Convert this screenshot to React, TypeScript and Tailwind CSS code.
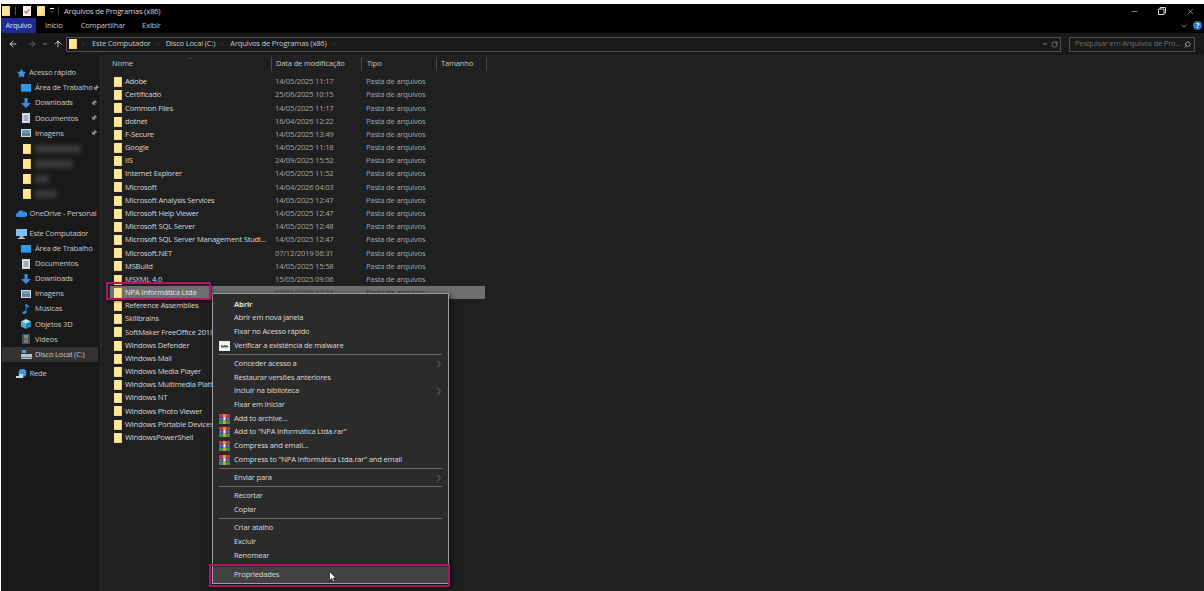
import React from 'react';
import { ArrowLeft, ArrowRight, ArrowUp, ChevronDown, ChevronRight, ChevronUp, RotateCw, Search, Minus, X, Pin, Star } from 'lucide-react';

const files: [string, string?][] = [
  ['Adobe', '14/05/2025 11:17'],
  ['Certificado', '25/06/2025 10:15'],
  ['Common Files', '14/05/2025 11:17'],
  ['dotnet', '16/04/2026 12:22'],
  ['F-Secure', '14/05/2025 13:49'],
  ['Google', '14/05/2025 11:18'],
  ['IIS', '24/09/2025 15:52'],
  ['Internet Explorer', '14/05/2025 11:52'],
  ['Microsoft', '14/04/2026 04:03'],
  ['Microsoft Analysis Services', '14/05/2025 12:47'],
  ['Microsoft Help Viewer', '14/05/2025 12:47'],
  ['Microsoft SQL Server', '14/05/2025 12:48'],
  ['Microsoft SQL Server Management Studi...', '14/05/2025 12:47'],
  ['Microsoft.NET', '07/12/2019 06:31'],
  ['MSBuild', '14/05/2025 15:58'],
  ['MSXML 4.0', '15/05/2025 09:06'],
  ['NPA Informática Ltda', '02/01/2026 12:24'],
  ['Reference Assemblies'],
  ['Skillbrains'],
  ['SoftMaker FreeOffice 2018'],
  ['Windows Defender'],
  ['Windows Mail'],
  ['Windows Media Player'],
  ['Windows Multimedia Platform'],
  ['Windows NT'],
  ['Windows Photo Viewer'],
  ['Windows Portable Devices'],
  ['WindowsPowerShell'],
];

const Folder = ({ className = '' }: { className?: string }) => (
  <svg viewBox="0 0 8 10" className={`w-2 h-2.5 shrink-0 ${className}`}>
    <rect width="8" height="10" fill="#ffe798" />
    <rect x="7" width="1" height="10" fill="#eec86c" />
    <rect y="9" width="8" height="1" fill="#f5d47c" />
  </svg>
);

const Winrar = () => (
  <svg viewBox="0 0 11 10" className="w-[11px] h-2.5">
    <rect width="11" height="3.4" fill="#c2363f" />
    <rect y="3.3" width="11" height="3.4" fill="#4a3fa8" />
    <rect y="6.6" width="11" height="3.4" fill="#3f8f3a" />
    <rect x="4" width="3" height="10" fill="#d9913a" />
    <rect x="4.8" y="3" width="1.4" height="3" fill="#f4efe2" />
    <rect x="1" y="4" width="1.5" height="1.5" fill="#8fa0e0" />
    <rect x="8.500" y="4" width="1.5" height="1.5" fill="#8fa0e0" />
  </svg>
);

type MenuRow = { label?: string; icon?: 'mb' | 'rar'; arrow?: boolean; bold?: boolean; sep?: boolean };

const menu: MenuRow[] = [
  { label: 'Abrir', bold: true },
  { label: 'Abrir em nova janela' },
  { label: 'Fixar no Acesso rápido' },
  { label: 'Verificar a existência de malware', icon: 'mb' },
  { sep: true },
  { label: 'Conceder acesso a', arrow: true },
  { label: 'Restaurar versões anteriores' },
  { label: 'Incluir na biblioteca', arrow: true },
  { label: 'Fixar em Iniciar' },
  { label: 'Add to archive...', icon: 'rar' },
  { label: 'Add to "NPA Informática Ltda.rar"', icon: 'rar' },
  { label: 'Compress and email...', icon: 'rar' },
  { label: 'Compress to "NPA Informática Ltda.rar" and email', icon: 'rar' },
  { sep: true },
  { label: 'Enviar para', arrow: true },
  { sep: true },
  { label: 'Recortar' },
  { label: 'Copiar' },
  { sep: true },
  { label: 'Criar atalho' },
  { label: 'Excluir' },
  { label: 'Renomear' },
  { sep: true },
];

const NavIcon = ({ kind }: { kind: string }) => {
  switch (kind) {
    case 'desktop':
      return <svg viewBox="0 0 10 8" className="w-2.5 h-2"><rect width="10" height="7" fill="#2f9be8" /><rect y="7" width="10" height="1" fill="#1c6fb0" /></svg>;
    case 'down':
      return <svg viewBox="0 0 10 10" className="w-2.5 h-2.5"><path d="M3.5 0h3v5H10L5 10 0 5h3.5z" fill="#3b8fe0" /></svg>;
    case 'docs':
      return <svg viewBox="0 0 10 10" className="w-2.5 h-2.5"><rect x="1" width="8" height="10" fill="#d5dde6" /><path d="M2.5 3h5M2.5 5h5M2.5 7h5" stroke="#55708c" strokeWidth="0.8" /></svg>;
    case 'pics':
      return <svg viewBox="0 0 10 8" className="w-2.5 h-2"><rect width="10" height="8" fill="#cfd8e2" /><rect x="1" y="1" width="8" height="3" fill="#5f9fc8" /><rect x="1" y="4" width="8" height="3" fill="#6b7c8c" /></svg>;
    case 'music':
      return <svg viewBox="0 0 10 10" className="w-2.5 h-2.5"><path d="M4.5 0h1l3 3-1 .8-2-1.4V8.2C5.500 9.300 4.200 10 3 10 1.900 10 1.300 9.300 1.500 8.500 1.800 7.500 3.300 6.900 4.500 7.100z" fill="#2d8fe6" /></svg>;
    case 'cube':
      return <svg viewBox="0 0 10 10" className="w-2.5 h-2.5"><path d="M5 0l5 2.500-5 2.500L0 2.500z" fill="#a8e4f2" /><path d="M0 2.500l5 2.500v5L0 7.500z" fill="#45b5d8" /><path d="M10 2.500L5 5v5l5-2.500z" fill="#1f86b8" /></svg>;
    case 'video':
      return <svg viewBox="0 0 10 10" className="w-2.5 h-2.5"><rect x="1" width="8" height="10" fill="#4a4f57" /><rect x="3" y="1" width="4" height="3.500" fill="#7c8794" /><rect x="3" y="5.500" width="4" height="3.500" fill="#8d6e63" /></svg>;
    case 'disk':
      return <svg viewBox="0 0 11 9" className="w-[11px] h-[9px]"><rect x="1" y="0" width="4" height="3" fill="#58a6dd" /><rect y="4" width="11" height="5" fill="#b9c4ce" /><rect x="0" y="7" width="11" height="1" fill="#6d7882" /></svg>;
    case 'cloud':
      return <svg viewBox="0 0 11 7" className="w-[11px] h-[7px]"><path d="M2 7a2 2 0 0 1-.300-4A3.200 3.200 0 0 1 7.500 1.700 2.700 2.700 0 0 1 9 7z" fill="#2d8fe6" /></svg>;
    case 'pc':
      return <svg viewBox="0 0 11 10" className="w-[11px] h-2.5"><rect width="11" height="7" fill="#7cc4ef" /><rect x="3.500" y="7" width="4" height="2" fill="#9aa6b0" /><rect x="2" y="9" width="7" height="1" fill="#c3ccd4" /></svg>;
    case 'net':
      return <svg viewBox="0 0 11 10" className="w-[11px] h-2.5"><circle cx="6.500" cy="4" r="4" fill="#3d97e0" /><path d="M3 5h4v4H0V7h3z" fill="#c5d6e4" /></svg>;
    default:
      return null;
  }
};

const NavRow = ({ icon, label, pin, active }: { icon: string; label: string; pin?: boolean; active?: boolean }) => (
  <div className={`h-[15.1px] flex items-center ml-px mr-[2px] pl-[19px] pr-px ${active ? 'bg-[#333333]' : ''}`}>
    <span className="w-[14px] flex shrink-0"><NavIcon kind={icon} /></span>
    <span className="whitespace-nowrap">{label}</span>
    {pin && <Pin size={6} className="ml-auto shrink-0 text-[#9a9a9a] rotate-45" fill="#9a9a9a" />}
  </div>
);

const BlurRow = ({ w }: { w: string }) => (
  <div className="h-[15.1px] flex items-center pl-[22px] gap-[4px]">
    <Folder />
    <div className={`h-2 bg-[#3a3a3a] blur-[2px] ${w}`} />
  </div>
);

export default function App() {
  return (
    <div className="relative w-[1204px] h-[591px] overflow-hidden bg-white pt-1 pl-px font-['Open_Sans',sans-serif] text-[7.6px] tracking-[-0.2px] leading-none text-[#d8d8d8]">
      <div className="h-[587px] flex flex-col bg-black">
        {/* title bar */}
        <div className="h-[14px] shrink-0 flex items-center pl-px relative">
          <Folder />
          <div className="w-px h-2 bg-[#555] ml-[5px]" />
          <svg viewBox="0 0 8 10" className="w-2 h-2.5 ml-[7px]">
            <rect width="8" height="10" fill="#f4f4f4" />
            <path d="M1.500 5l2 2 3-4" stroke="#e0552f" strokeWidth="1.200" fill="none" />
          </svg>
          <Folder className="ml-1.5" />
          <div className="w-[6px] flex flex-col items-center gap-px ml-[4px]">
            <div className="w-1 h-px bg-white" />
            <ChevronDown size={4} className="text-white" strokeWidth={3} />
          </div>
          <div className="w-px h-2 bg-[#444] ml-[3px]" />
          <span className="ml-[5px] pt-px text-[#d4d4d4]">Arquivos de Programas (x86)</span>
          <div className="ml-auto flex items-center text-[#d0d0d0]">
            <Minus size={9} strokeWidth={1.500} />
            <svg viewBox="0 0 8 8" className="w-2 h-2 ml-[19px]"><path d="M2 2V.5h5.500V6H6M.5 2H6v5.500H.5z" fill="none" stroke="#d0d0d0" /></svg>
            <X size={9} strokeWidth={1.500} className="ml-[20px] mr-[9px]" />
          </div>
        </div>

        {/* ribbon tabs */}
        <div className="h-[15px] shrink-0 flex items-center text-[#c4c4c4] relative">
          <div className="w-[35px] h-full bg-[#1f2a98] flex items-center justify-center text-[#e4e4e4]">Arquivo</div>
          <span className="ml-[9px]">Início</span>
          <span className="ml-[18px]">Compartilhar</span>
          <span className="ml-[17px]">Exibir</span>
          <div className="ml-auto flex items-center mr-[2px]">
            <ChevronDown size={8} strokeWidth={2} className="text-[#cfcfcf] mr-[5px]" />
            <div className="w-[9px] h-[9px] rounded-full bg-[#1f78d1] text-white text-[7px] font-bold flex items-center justify-center">?</div>
          </div>
        </div>

        {/* address bar */}
        <div className="h-[22px] shrink-0 flex items-center bg-[#191919] text-[#c8c8c8]">
          <ArrowLeft size={10} strokeWidth={2} className="ml-[7px] text-[#e8e8e8]" />
          <ArrowRight size={10} strokeWidth={2} className="ml-[9px] text-[#6a6a6a]" />
          <ChevronDown size={6} strokeWidth={3} className="ml-[5px] text-[#bdbdbd]" />
          <ArrowUp size={10} strokeWidth={2} className="ml-[5px] text-[#e8e8e8]" />
          <div className="ml-[3px] w-[995px] h-[15px] border border-[#505050] flex items-center pl-[2px]">
            <Folder />
            <ChevronRight size={5} className="ml-[4px] text-[#888]" />
            <span className="ml-[6px]">Este Computador</span>
            <ChevronRight size={5} className="ml-[5px] text-[#888]" />
            <span className="ml-[5px]">Disco Local (C:)</span>
            <ChevronRight size={5} className="ml-[5px] text-[#888]" />
            <span className="ml-[5px]">Arquivos de Programas (x86)</span>
            <ChevronRight size={5} className="ml-[5px] text-[#888]" />
            <ChevronDown size={6} strokeWidth={3} className="ml-auto text-[#bdbdbd]" />
            <RotateCw size={7} className="ml-[3px] mr-[2px] text-[#a8a8a8]" />
          </div>
          <div className="ml-[8px] w-[126px] h-[15px] border border-[#505050] flex items-center pl-[5px] pr-[3px] text-[#6e6e6e]">
            <span className="whitespace-nowrap">Pesquisar em Arquivos de Pro...</span>
            <Search size={7} strokeWidth={2.500} className="ml-auto text-[#c0c0c0] -scale-x-100" />
          </div>
        </div>

        {/* body */}
        <div className="flex-1 min-h-0 flex">
          <aside className="w-[100px] shrink-0 bg-[#191919] border-r border-[#2b2b2b] pt-[10.500px] text-[#c8c8c8]">
            <div className="h-[15.1px] flex items-center pl-[16px]">
              <Star size={9} className="text-[#3b9be8] mr-[3px]" fill="#3b9be8" />
              <span>Acesso rápido</span>
            </div>
            <NavRow icon="desktop" label="Área de Trabalho" pin />
            <NavRow icon="down" label="Downloads" pin />
            <NavRow icon="docs" label="Documentos" pin />
            <NavRow icon="pics" label="Imagens" pin />
            <BlurRow w="w-[46px]" />
            <BlurRow w="w-[38px]" />
            <BlurRow w="w-[14px]" />
            <BlurRow w="w-[22px]" />
            <div className="h-[4.500px]" />
            <div className="h-[15.1px] flex items-center pl-[15px]">
              <span className="w-[13.500px] flex"><NavIcon kind="cloud" /></span>
              <span className="whitespace-nowrap">OneDrive - Personal</span>
            </div>
            <div className="h-[5.300px]" />
            <div className="h-[15.1px] flex items-center pl-[15px]">
              <span className="w-[13.500px] flex"><NavIcon kind="pc" /></span>
              <span className="whitespace-nowrap">Este Computador</span>
            </div>
            <NavRow icon="desktop" label="Área de Trabalho" />
            <NavRow icon="docs" label="Documentos" />
            <NavRow icon="down" label="Downloads" />
            <NavRow icon="pics" label="Imagens" />
            <NavRow icon="music" label="Músicas" />
            <NavRow icon="cube" label="Objetos 3D" />
            <NavRow icon="video" label="Vídeos" />
            <NavRow icon="disk" label="Disco Local (C:)" active />
            <div className="h-[4.500px]" />
            <div className="h-[15.1px] flex items-center pl-[15px]">
              <span className="w-[13.500px] flex"><NavIcon kind="net" /></span>
              <span>Rede</span>
            </div>
          </aside>

          <main className="flex-1 min-w-0 bg-[#202020]">
            {/* column headers */}
            <div className="relative h-[18px] flex items-center pl-[11px] text-[#c4c4c4]">
              <span className="w-[159px]">Nome</span>
              <span className="w-[90px] h-[14px] border-l border-[#4a4a4a] pl-1 flex items-center">Data de modificação</span>
              <span className="w-[75px] h-[14px] border-l border-[#4a4a4a] pl-[5px] flex items-center">Tipo</span>
              <span className="w-[51px] h-[14px] border-x border-[#4a4a4a] pl-1 flex items-center">Tamanho</span>
              <ChevronUp size={6} className="absolute left-[86px] top-0 text-[#888]" />
            </div>
            <div className="pt-[2.500px]">
              {files.map(([name, date]) => {
                const selected = name === 'NPA Informática Ltda';
                return (
                  <div key={name} className={`h-[13.185px] ml-[9px] w-[375px] flex items-center pl-[4px] ${selected ? 'bg-[#6f6f6f]' : ''}`}>
                    <Folder />
                    <span className={`ml-[3px] w-[141px] whitespace-nowrap ${selected ? 'text-[#e8e8e8]' : 'text-[#d8d8d8]'}`}>{name}</span>
                    <span className={`ml-[9px] w-[91px] ${selected ? 'text-[#3a3a3a]' : 'text-[#a6a6a6]'}`}>{date}</span>
                    {date && <span className={selected ? 'text-[#3a3a3a]' : 'text-[#a6a6a6]'}>Pasta de arquivos</span>}
                  </div>
                );
              })}
            </div>
          </main>
        </div>
      </div>

      {/* context menu */}
      <div className="absolute left-[212px] top-[293px] w-[237px] h-[291px] bg-[#2b2b2b] border border-[#a0a0a0] pt-[3.500px] text-[#dcdcdc] shadow-[2px_2px_6px_rgba(0,0,0,0.6)]">
        {menu.map((m, i) =>
          m.sep ? (
            <div key={i} className="h-[4.600px] flex items-center px-[6px]">
              <div className="h-px w-full bg-[#6a6a6a]" />
            </div>
          ) : (
            <div key={i} className="h-[13.700px] flex items-center relative pl-[21px] whitespace-nowrap">
              {m.icon === 'rar' && <span className="absolute left-[6px] top-[2px]"><Winrar /></span>}
              {m.icon === 'mb' && (
                <svg viewBox="0 0 11 10" className="absolute left-[6px] top-[2px] w-[11px] h-2.5">
                  <rect width="11" height="10" fill="#f2f2f2" />
                  <path d="M2 4l1 2.500 1-2 1 2 1-2.500 1 2.500 1-2 1 2" stroke="#333" strokeWidth="0.800" fill="none" />
                </svg>
              )}
              <span className={m.bold ? 'font-bold' : ''}>{m.label}</span>
              {m.arrow && <ChevronRight size={12} strokeWidth={1} className="absolute right-[3px] top-[1px] text-[#b4b4b4]" />}
            </div>
          )
        )}
        <div className="h-[16px] bg-[#414141] flex items-center pl-[21px]">Propriedades</div>
      </div>

      {/* annotation boxes */}
      <div className="absolute left-[106px] top-[282px] w-[105px] h-[18px] border-2 border-[#b3145f] shadow-[1px_1px_3px_rgba(0,0,0,0.6)]" />
      <div className="absolute left-[209px] top-[564px] w-[241px] h-[23px] border-2 border-[#b3145f] shadow-[1px_1px_3px_rgba(0,0,0,0.6)]" />

      {/* mouse cursor */}
      <svg viewBox="0 0 8 12" className="absolute left-[329px] top-[571px] w-2 h-3">
        <path d="M.5.5v9l2.200-2 1.500 3.500 1.500-.7L4.200 7H7z" fill="#fff" stroke="#000" strokeWidth="0.600" />
      </svg>
    </div>
  );
}
